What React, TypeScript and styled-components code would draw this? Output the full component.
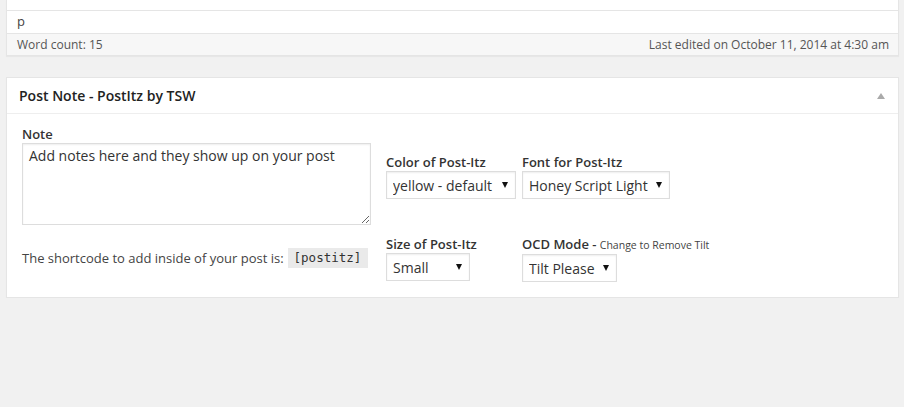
import { type FC } from "react";
import styled, { createGlobalStyle } from "styled-components";

const GlobalStyle = createGlobalStyle`
  html, body {
    margin: 0;
    padding: 0;
    background: #f1f1f1;
    font-family: "Open Sans", "Liberation Sans", sans-serif;
    font-size: 13px;
    color: #444;
  }
  * {
    box-sizing: border-box;
  }
`;

const Page = styled.div`
  padding: 0 5px 0 6px;
`;

const EditorBox = styled.div`
  background: #fff;
  border: 1px solid #e5e5e5;
  border-top: none;
  box-shadow: 0 1px 1px rgba(0, 0, 0, 0.04);
`;

const EditorTail = styled.div`
  height: 10px;
`;

const PathRow = styled.div`
  border-top: 1px solid #e5e5e5;
  height: 23px;
  padding: 0 10px;
  line-height: 20px;
  color: #444;
`;

const StatusBar = styled.div`
  display: flex;
  justify-content: space-between;
  border-top: 1px solid #e5e5e5;
  background: #f7f7f7;
  height: 22px;
  padding: 0 9px 0 10px;
  line-height: 21px;
  font-size: 12px;
  color: #555;
`;

const Postbox = styled.div`
  margin-top: 21px;
  background: #fff;
  border: 1px solid #e5e5e5;
  box-shadow: 0 1px 1px rgba(0, 0, 0, 0.04);
`;

const Header = styled.div`
  display: flex;
  align-items: center;
  justify-content: space-between;
  height: 36px;
  padding: 0 12px;
  border-bottom: 1px solid #eee;
`;

const Title = styled.h3`
  margin: 0;
  font-size: 14px;
  font-weight: 600;
  color: #222;
`;

const Toggle = styled.span`
  width: 0;
  height: 0;
  margin-right: 1px;
  border-left: 4px solid transparent;
  border-right: 4px solid transparent;
  border-bottom: 6px solid #aaa;
`;

const Inside = styled.div`
  display: flex;
  padding: 11px 15px 15px;
`;

const LeftCol = styled.div`
  width: 349px;
  margin-right: 15px;
`;

const Label = styled.div`
  font-weight: 600;
  color: #333;
  line-height: 18px;
  white-space: nowrap;
`;

const Hint = styled.span`
  font-weight: 400;
  font-size: 10.5px;
  color: #444;
`;

const TextArea = styled.textarea`
  display: block;
  width: 349px;
  height: 82px;
  margin: 0;
  padding: 2px 6px;
  border: 1px solid #ddd;
  box-shadow: inset 0 1px 2px rgba(0, 0, 0, 0.07);
  font-family: "Open Sans", "Liberation Sans", sans-serif;
  font-size: 14px;
  line-height: 19px;
  color: #333;
  resize: both;
`;

const Shortcode = styled.div`
  margin-top: 23px;
  display: flex;
  align-items: center;
  line-height: 20px;
  color: #444;
`;

const Code = styled.code`
  margin-left: 4px;
  padding: 0 7px 0 6px;
  height: 20px;
  line-height: 20px;
  background: #eaeaea;
  font-family: "DejaVu Sans Mono", "Liberation Mono", monospace;
  font-size: 12.5px;
  color: #333;
`;

const Options = styled.div`
  display: grid;
  grid-template-columns: auto auto;
  column-gap: 6px;
  row-gap: 36px;
  align-content: start;
  padding-top: 28px;
`;

const Field = styled.div`
  display: flex;
  flex-direction: column;
  align-items: flex-start;
`;

const SelectWrap = styled.div<{ $width: number }>`
  position: relative;
  width: ${(p) => p.$width}px;
  height: 28px;
`;

const Select = styled.select`
  appearance: none;
  width: 100%;
  height: 100%;
  margin: 0;
  padding: 0 20px 0 6px;
  border: 1px solid #ddd;
  border-radius: 0;
  background: #fff;
  box-shadow: inset 0 1px 2px rgba(0, 0, 0, 0.07);
  font-family: "Open Sans", "Liberation Sans", sans-serif;
  font-size: 14px;
  color: #333;
`;

const Arrow = styled.span`
  position: absolute;
  right: 8px;
  top: 11px;
  width: 0;
  height: 0;
  border-left: 3.5px solid transparent;
  border-right: 3.5px solid transparent;
  border-top: 6px solid #111;
  pointer-events: none;
`;

interface DropProps {
  width: number;
  value: string;
  options: string[];
}

const Drop: FC<DropProps> = ({ width, value, options }) => (
  <SelectWrap $width={width}>
    <Select defaultValue={value}>
      {options.map((o) => (
        <option key={o}>{o}</option>
      ))}
    </Select>
    <Arrow />
  </SelectWrap>
);

const App: FC = () => {
  return (
    <Page>
      <GlobalStyle />
      <EditorBox>
        <EditorTail />
        <PathRow>p</PathRow>
        <StatusBar>
          <span>Word count: 15</span>
          <span>Last edited on October 11, 2014 at 4:30 am</span>
        </StatusBar>
      </EditorBox>

      <Postbox>
        <Header>
          <Title>Post Note - PostItz by TSW</Title>
          <Toggle />
        </Header>
        <Inside>
          <LeftCol>
            <Label>Note</Label>
            <TextArea defaultValue="Add notes here and they show up on your post" />
            <Shortcode>
              The shortcode to add inside of your post is:
              <Code>[postitz]</Code>
            </Shortcode>
          </LeftCol>
          <Options>
            <Field>
              <Label>Color of Post-Itz</Label>
              <Drop
                width={130}
                value="yellow - default"
                options={["yellow - default", "blue", "green", "pink"]}
              />
            </Field>
            <Field>
              <Label>Font for Post-Itz</Label>
              <Drop
                width={148}
                value="Honey Script Light"
                options={["Honey Script Light", "Arial"]}
              />
            </Field>
            <Field>
              <Label>Size of Post-Itz</Label>
              <Drop width={84} value="Small" options={["Small", "Medium", "Large"]} />
            </Field>
            <Field>
              <Label>
                OCD Mode - <Hint>Change to Remove Tilt</Hint>
              </Label>
              <Drop width={95} value="Tilt Please" options={["Tilt Please", "No Tilt"]} />
            </Field>
          </Options>
        </Inside>
      </Postbox>
    </Page>
  );
};

export default App;
